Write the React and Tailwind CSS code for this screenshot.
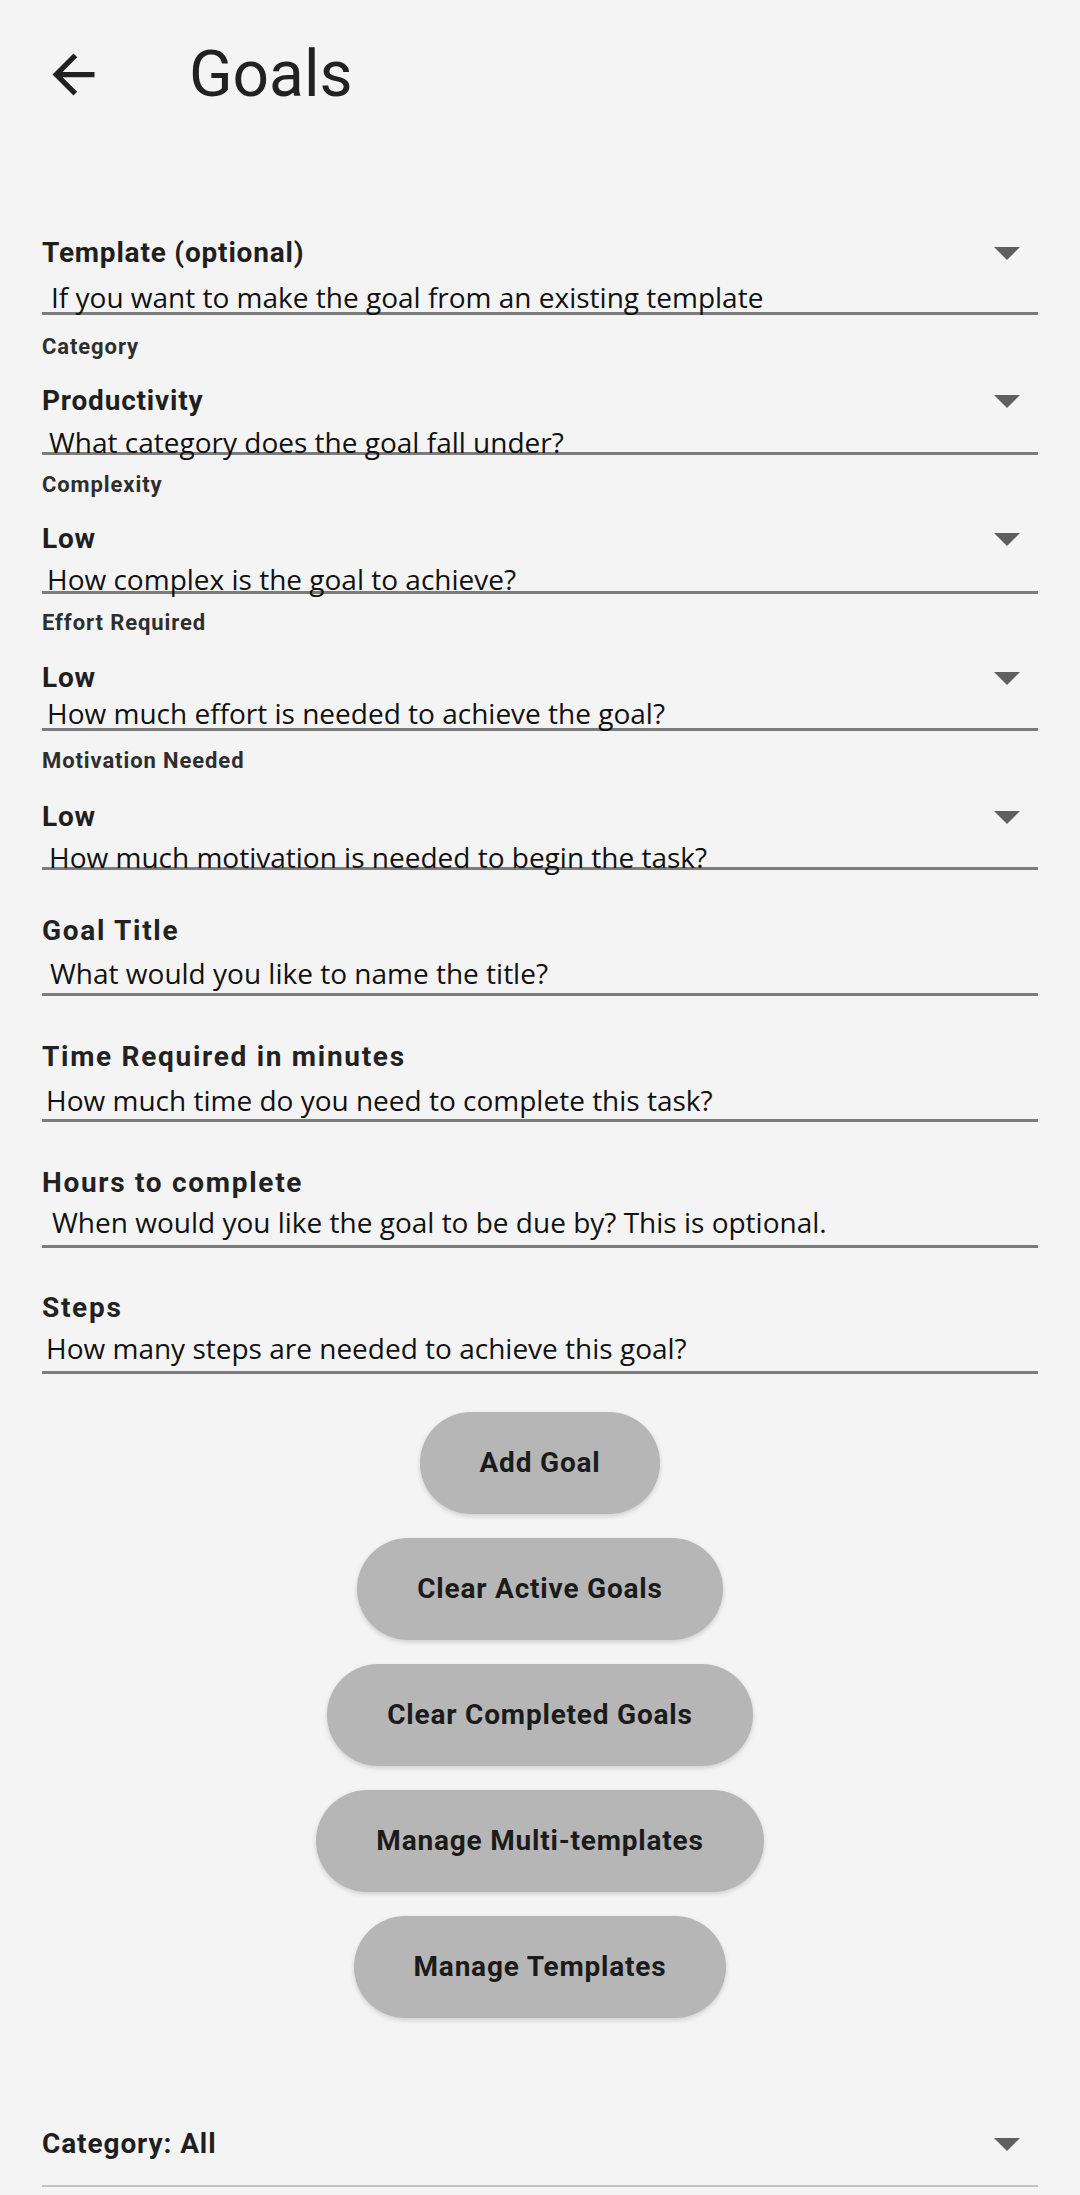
import React from "react";

function Caret() {
  return (
    <svg width="26" height="13" viewBox="0 0 26 13" className="mr-[18px] shrink-0">
      <path d="M0 0 H26 L13 13 Z" fill="#5f5f5f" />
    </svg>
  );
}

function SmallLabel({ text, cls }) {
  return (
    <div className={`h-[28px] leading-[28px] text-[22px] font-bold tracking-[0.9px] text-[#2e2e2e] ${cls}`}>
      {text}
    </div>
  );
}

function ValueRow({ text, cls }) {
  return (
    <div className={`h-[40px] flex items-center justify-between ${cls}`}>
      <span className="text-[28px] font-bold tracking-[0.8px] text-[#1f1f1f] leading-[40px]">{text}</span>
      <Caret />
    </div>
  );
}

function Hint({ text, cls }) {
  return (
    <div
      className={`border-b-[3px] border-[#7c7c7c] font-['Open_Sans',sans-serif] text-[28px] text-[#111111] whitespace-nowrap ${cls}`}
    >
      {text}
    </div>
  );
}

function TextLabel({ text, cls }) {
  return (
    <div className={`h-[40px] leading-[40px] text-[28px] font-bold tracking-[1.7px] text-[#222222] ${cls}`}>
      {text}
    </div>
  );
}

function PillButton({ children }) {
  return (
    <button className="h-[102px] px-[60px] rounded-full bg-[#b6b6b6] text-[28px] font-bold tracking-[0.8px] text-[#1b1b1b] shadow-[0_2px_5px_rgba(0,0,0,0.16)] font-['Roboto',sans-serif]">
      {children}
    </button>
  );
}

export default function App() {
  return (
    <div className="min-h-[2195px] bg-[#f4f4f4] font-['Roboto',sans-serif]">
      <header className="h-[148px] flex items-center pl-[42px]">
        <svg width="63" height="63" viewBox="0 0 24 24" className="shrink-0">
          <path d="M20 11H7.83l5.59-5.59L12 4l-8 8 8 8 1.41-1.41L7.83 13H20v-2z" fill="#212121" />
        </svg>
        <h1 className="ml-[84px] mt-[2px] text-[64px] leading-[64px] font-normal text-[#212121]">Goals</h1>
      </header>

      <div className="px-[42px] flex flex-col">
        {/* Template */}
        <ValueRow text="Template (optional)" cls="mt-[85px]" />
        <Hint text="If you want to make the goal from an existing template" cls="pt-[10px] leading-[29px] pl-[9px]" />

        {/* Category */}
        <SmallLabel text="Category" cls="mt-[18px]" />
        <ValueRow text="Productivity" cls="mt-[20px]" />
        <Hint text="What category does the goal fall under?" cls="pt-[12px] leading-[19px] pl-[7px]" />

        {/* Complexity */}
        <SmallLabel text="Complexity" cls="mt-[16px]" />
        <ValueRow text="Low" cls="mt-[20px]" />
        <Hint text="How complex is the goal to achieve?" cls="pt-[8px] leading-[24px] pl-[5px]" />

        {/* Effort */}
        <SmallLabel text="Effort Required" cls="mt-[15px]" />
        <ValueRow text="Low" cls="mt-[21px]" />
        <Hint text="How much effort is needed to achieve the goal?" cls="pt-[1px] leading-[29px] pl-[5px]" />

        {/* Motivation */}
        <SmallLabel text="Motivation Needed" cls="mt-[16px]" />
        <ValueRow text="Low" cls="mt-[22px]" />
        <Hint text="How much motivation is needed to begin the task?" cls="pt-[11px] leading-[19px] pl-[7px]" />

        {/* Goal Title */}
        <TextLabel text="Goal Title" cls="mt-[41px]" />
        <Hint text="What would you like to name the title?" cls="pt-[2px] leading-[40px] pl-[8px]" />

        {/* Time Required */}
        <TextLabel text="Time Required in minutes" cls="mt-[41px]" />
        <Hint text="How much time do you need to complete this task?" cls="pt-[4px] leading-[38px] pl-[4px]" />

        {/* Hours */}
        <TextLabel text="Hours to complete" cls="mt-[41px]" />
        <Hint text="When would you like the goal to be due by? This is optional." cls="pb-[3px] leading-[39px] pl-[10px]" />

        {/* Steps */}
        <TextLabel text="Steps" cls="mt-[40px]" />
        <Hint text="How many steps are needed to achieve this goal?" cls="pb-[3px] leading-[40px] pl-[4px]" />

        <div className="mt-[38px] flex flex-col items-center gap-[24px]">
          <PillButton>Add Goal</PillButton>
          <PillButton>Clear Active Goals</PillButton>
          <PillButton>Clear Completed Goals</PillButton>
          <PillButton>Manage Multi-templates</PillButton>
          <PillButton>Manage Templates</PillButton>
        </div>

        <div className="mt-[106px] pb-[21px] border-b-2 border-[#c4c4c4]">
          <div className="h-[40px] flex items-center justify-between">
            <span className="text-[28px] font-bold tracking-[0.9px] text-[#1f1f1f] leading-[40px]">Category: All</span>
            <Caret />
          </div>
        </div>
      </div>
    </div>
  );
}
